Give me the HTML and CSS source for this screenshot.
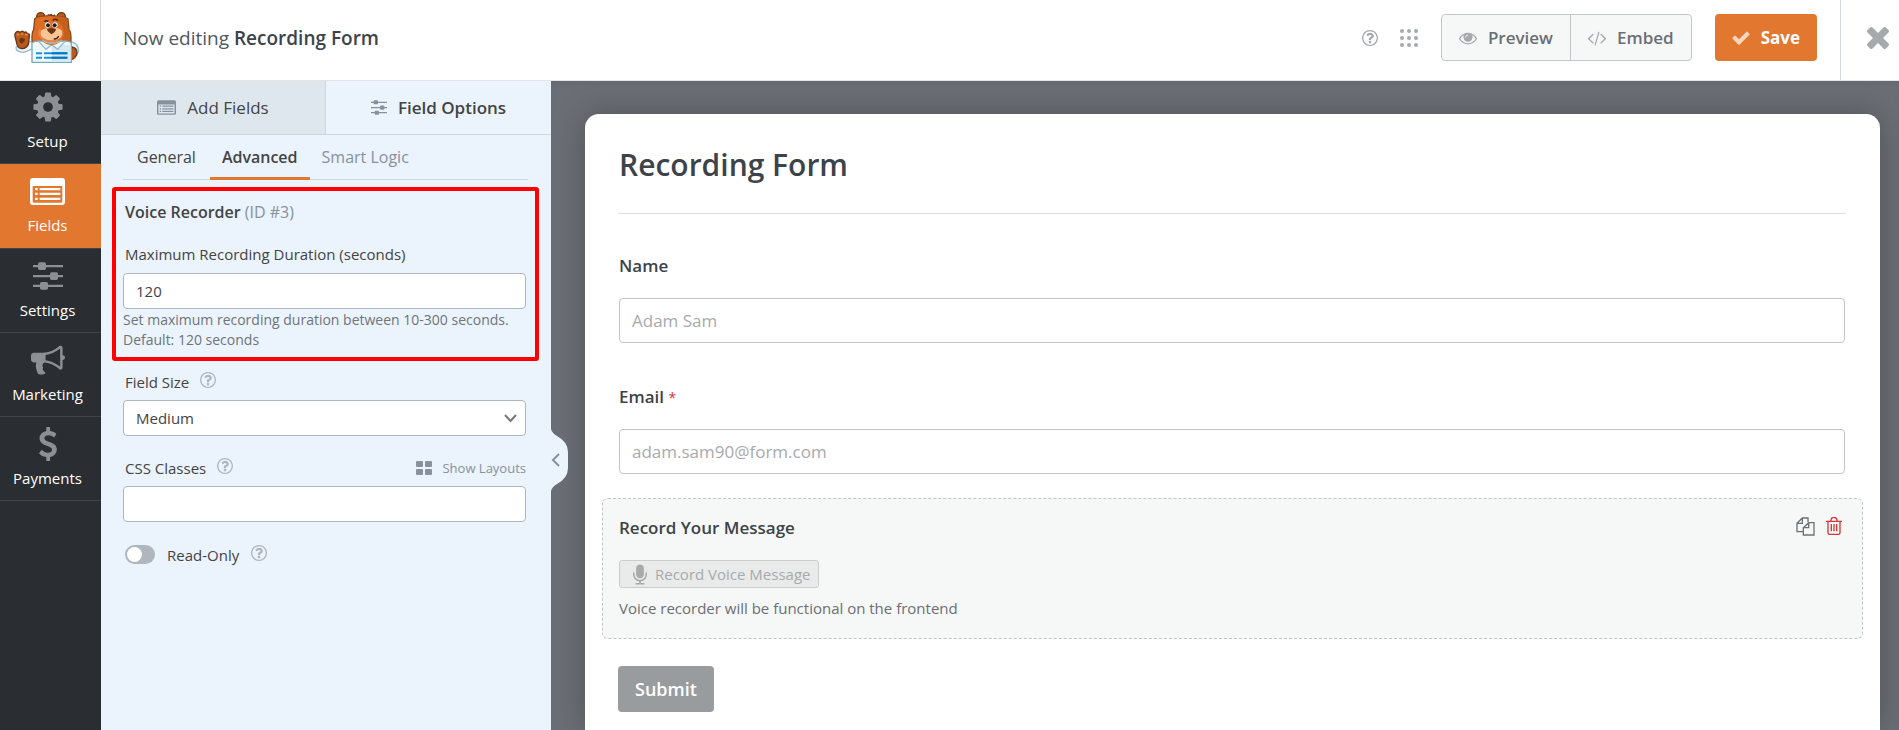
FILE: index.html
```html
<!DOCTYPE html>
<html lang="en">
<head>
<meta charset="utf-8">
<title>Recording Form</title>
<link rel="stylesheet" href="styles.css">
</head>
<body>
<svg class="defs" aria-hidden="true">
  <symbol id="help" viewBox="128 128 1536 1536"><path d="M1008 1200v160q0 14-9 23t-23 9h-160q-14 0-23-9t-9-23v-160q0-14 9-23t23-9h160q14 0 23 9t9 23zm256-496q0 50-15 90t-45.500 69-52 44-59.500 36q-32 18-46.500 28t-26 24-11.500 29v32q0 14-9 23t-23 9h-160q-14 0-23-9t-9-23v-68q0-35 10.500-64.500t24-47.500 39-35.500 41-25.500 44.500-21q53-25 75-43t22-49q0-42-43.500-71.500t-95.500-29.500q-56 0-95 27-29 20-80 83-9 12-25 12-11 0-19-6l-108-82q-10-7-12-20t5-23q122-192 349-192 129 0 238.500 89.500t109.500 214.500zm-368-448q-130 0-248.500 51t-204 136.500-136.500 204-51 248.500 51 248.500 136.500 204 204 136.500 248.500 51 248.500-51 204-136.500 136.500-204 51-248.500-51-248.500-136.500-204-204-136.500-248.500-51zm768 640q0 209-103 385.500t-279.500 279.500-385.500 103-385.500-103-279.500-279.500-103-385.500 103-385.500 279.500-279.500 385.500-103 385.500 103 279.500 279.500 103 385.500z"/></symbol>
  <symbol id="sliders" viewBox="0 0 90 84"><path d="M0 9h90v7H0zM0 39h90v7H0zM0 68h90v7H0z"/><rect x="15" y="1" width="24" height="23" rx="5"/><rect x="51" y="31" width="24" height="23" rx="5"/><rect x="21" y="60" width="24" height="23" rx="5"/></symbol>
  <symbol id="list" viewBox="0 0 105 81"><path fill-rule="evenodd" d="M9 0h87q9 0 9 9v63q0 9-9 9H9q-9 0-9-9V9Q0 0 9 0zM8 24v46q0 4 4 4h81q4 0 4-4V24zM15 30h8v7h-8zM29 30h62v7H29zM15 44h8v7h-8zM29 44h62v7H29zM15 59h8v7h-8zM29 59h62v7H29z"/></symbol>
</svg>

<header class="topbar">
  <div class="logo">
    <svg class="bear" viewBox="36 27 210 168" role="img" aria-label="Bear mascot">
      <path d="M48 142q-1 14 24 15l30-12V126l-28-3z" fill="#e9f6fc" stroke="#8fbccc" stroke-width="4"/>
      <path d="M48 97q7-6 12 1 7-9 13 0 7-6 9 4 8-2 6 7l-3 24q-6 12-18 13-13-1-16-13l-6-24q-2-8 3-12z" fill="#b85b1e" stroke="#6b3413" stroke-width="4"/>
      <path d="M50 104h8m4-2h8m5 2h8" stroke="#e88a4a" stroke-width="5"/><path d="M58 117l8-4 9 4-2 8-8 6-7-6z" fill="#6b3413"/>
      <path d="M206 124q31 3 29 31-6 14-20 11z" fill="#e9f6fc" stroke="#8fbccc" stroke-width="4"/>
      <path d="M215 141q16 2 16 19-4 16-18 19z" fill="#b85b1e" stroke="#6b3413" stroke-width="4"/>
      <circle cx="122" cy="50" r="12" fill="#b85b1e" stroke="#6b3413" stroke-width="4"/><circle cx="184" cy="50" r="12" fill="#b85b1e" stroke="#6b3413" stroke-width="4"/>
      <path d="M104 57q5-7 16-8l24-2 6-3 5 3 20 2q18 0 29 8l3 32q7 6 6 34l-6 8H102l-6-9q-1-26 5-33z" fill="#dd6c25" stroke="#8b4418" stroke-width="4"/>
      <path d="M163 48q30 0 39 10l3 33q7 8 6 31l-5 7h-27q20-20 9-48z" fill="#c45f1e"/>
      <path d="M142 46l2-4 4 4 6-5 5 5 5-3 2 5z" fill="#6b3413"/>
      <path d="M122 92q12-9 31-7 26-4 33 8 5 15-9 23-22 11-44 0-17-8-11-24z" fill="#f9c594"/><path d="M120 88q-7 24 15 33 20 8 40 0" fill="none" stroke="#e9834a" stroke-width="6"/>
      <circle cx="143" cy="75" r="8" fill="#fff"/><circle cx="165" cy="75" r="8" fill="#fff"/><circle cx="144" cy="76" r="6" fill="#16222c"/><circle cx="164" cy="76" r="6" fill="#16222c"/>
      <path d="M133 65q6-5 12-1m13-3q9-7 15 1" fill="none" stroke="#4a240e" stroke-width="5"/>
      <path d="M141 87q13-6 27 0-1 9-13 16-13-7-14-16z" fill="#6b3413"/><path d="M161 117q11 1 15-9" fill="none" stroke="#4a240e" stroke-width="4"/>
      <path d="M96 128q15-7 24-3l35 7 36-7q11-4 23 3v59H96z" fill="#f1f9fd" stroke="#78a9bc" stroke-width="4"/>
      <path d="M155 135h56v50h-56z" fill="#d5eaf3"/>
      <path d="M116 124l22 24 17-14 18 14 22-24-15-1q-25 12-49 0z" fill="#e9f6fc" stroke="#8fbccc" stroke-width="4"/><path d="M121 121q34 20 69 0l-20 11q-15 6-31 0z" fill="#dd6c25"/>
      <path d="M108 160h18m6 0h70M108 173h18m6 0h70" stroke="#1793dc" stroke-width="6"/><path d="M155 160h47M155 173h47" stroke="#0875bd" stroke-width="6"/>
    </svg>
  </div>
  <div class="editing">Now editing <strong>Recording Form</strong></div>
  <div class="actions">
    <button class="icon-button" type="button" aria-label="Help"><svg class="i16" aria-hidden="true"><use href="#help"/></svg></button>
    <button class="icon-button apps" type="button" aria-label="Apps"><svg width="18" height="18" viewBox="0 0 18 18" aria-hidden="true"><g id="r"><circle cx="2" cy="2" r="2"/><circle cx="9" cy="2" r="2"/><circle cx="16" cy="2" r="2"/></g><use href="#r" y="7"/><use href="#r" y="14"/></svg></button>
    <div class="group">
      <button type="button"><svg width="18" height="18" viewBox="0 0 1792 1792" aria-hidden="true"><path d="M1664 960q-152-236-381-353 61 104 61 225 0 185-131.500 316.500t-316.500 131.500-316.500-131.500-131.500-316.500q0-121 61-225-229 117-381 353 133 205 333.500 326.500t434.500 121.500 434.500-121.500 333.500-326.500zm128 0q0 34-20 69-140 230-376.500 368.500t-499.500 138.500-499.500-139-376.500-368q-20-35-20-69t20-69q140-229 376.500-368t499.500-139 499.500 139 376.500 368q20 35 20 69z"/><path d="M896 528q-125 0-214 90t-90 214q0 48 48 48t48-48q0-86 61-147t147-61q48 0 48-48t-48-48z" fill="#f6f8f7"/><circle cx="896" cy="832" r="400"/><path d="M896 560q-110 0-190 80t-80 190q0 40 40 40t40-40q0-80 56-136t134-56q40 0 40-39t-40-39z" fill="#f6f8f7"/></svg>Preview</button>
      <button type="button"><svg width="18" height="18" viewBox="0 0 1792 1792" aria-hidden="true"><path d="M553 1399l-50 50q-10 10-23 10t-23-10l-466-466q-10-10-10-23t10-23l466-466q10-10 23-10t23 10l50 50q10 10 10 23t-10 23l-393 393 393 393q10 10 10 23t-10 23zm591-1067l-373 1291q-4 13-15.500 19.500t-23.500 2.500l-62-17q-13-4-19.500-15.500t-2.500-24.500l373-1291q4-13 15.500-19.500t23.500-2.500l62 17q13 4 19.500 15.500t2.500 24.500zm657 651l-466 466q-10 10-23 10t-23-10l-50-50q-10-10-10-23t10-23l393-393-393-393q-10-10-10-23t10-23l50-50q10-10 23-10t23 10l466 466q10 10 10 23t-10 23z"/></svg>Embed</button>
    </div>
    <button class="save" type="button"><svg width="18" height="18" viewBox="80 100 1632 1632" aria-hidden="true"><path d="M1671 566q0 40-28 68l-724 724-136 136q-28 28-68 28t-68-28l-136-136-362-362q-28-28-28-68t28-68l136-136q28-28 68-28t68 28l294 295 656-657q28-28 68-28t68 28l136 136q28 28 28 68z"/></svg>Save</button>
  </div>
  <button class="close" type="button" aria-label="Close"><svg width="22" height="22" viewBox="302 366 1188 1188" aria-hidden="true"><path d="M1490 1322q0 40-28 68l-136 136q-28 28-68 28t-68-28l-294-294-294 294q-28 28-68 28t-68-28l-136-136q-28-28-28-68t28-68l294-294-294-294q-28-28-28-68t28-68l136-136q28-28 68-28t68 28l294 294 294-294q28-28 68-28t68 28l136 136q28 28 28 68t-28 68l-294 294 294 294q28 28 28 68z"/></svg></button>
</header>

<div class="workspace">
  <nav class="rail">
    <a href="#setup"><svg width="34" height="34" viewBox="0 0 1792 1792" aria-hidden="true"><path d="M1152 896q0-106-75-181t-181-75-181 75-75 181 75 181 181 75 181-75 75-181zm512-109v222q0 12-8 23t-20 13l-185 28q-19 54-39 91 35 50 107 138 10 12 10 25t-9 23q-27 37-99 108t-94 71q-12 0-26-9l-138-108q-44 23-91 38-16 136-29 186-7 28-36 28h-222q-14 0-24.500-8.500t-11.500-21.500l-28-184q-49-16-90-37l-141 107q-10 9-25 9-14 0-25-11-126-114-165-168-7-10-7-23 0-12 8-23 15-21 51-66.500t54-70.500q-27-50-41-99l-183-27q-13-2-21-12.500t-8-23.500v-222q0-12 8-23t19-13l186-28q14-46 39-92-40-57-107-138-10-12-10-24 0-10 9-23 26-36 98.500-107.500t94.500-71.500q13 0 26 10l138 107q44-23 91-38 16-136 29-186 7-28 36-28h222q14 0 24.500 8.500t11.500 21.500l28 184q49 16 90 37l142-107q9-9 24-9 13 0 25 10 129 119 165 170 7 8 7 22 0 12-8 23-15 21-51 66.500t-54 70.500q26 50 41 98l183 28q13 2 21 12.500t8 23.500z"/></svg>Setup</a>
    <a class="active" href="#fields"><svg width="35" height="27" aria-hidden="true"><use href="#list"/></svg>Fields</a>
    <a href="#settings"><svg width="30" height="28" aria-hidden="true"><use href="#sliders"/></svg>Settings</a>
    <a href="#marketing"><svg width="34" height="34" viewBox="0 0 1792 1792" aria-hidden="true"><path d="M1664 640q53 0 90.500 37.500t37.500 90.500-37.500 90.500-90.500 37.500v384q0 52-38 90t-90 38q-417-347-812-380-58 19-91 66t-31 100.500 40 92.500q-20 33-23 65.500t6 58 33.500 55 48 50 61.500 50.500q-29 58-111.500 83t-168.500 11.500-132-55.500q-7-23-29.500-87.500t-32-94.500-23-89-15-101 3.500-98.500 22-110.500h-122q-66 0-113-47t-47-113v-192q0-66 47-113t113-47h480q435 0 896-384 52 0 90 38t38 90v384zm-128 604v-954q-394 302-768 343v270q377 42 768 341z"/></svg>Marketing</a>
    <a href="#payments"><svg width="34" height="34" viewBox="0 0 1792 1792" aria-hidden="true"><path d="M1362 1185q0 153-99.500 263.500t-258.500 136.500v175q0 14-9 23t-23 9h-135q-13 0-22.500-9.500t-9.500-22.500v-175q-66-9-127.500-31t-101.500-44.500-74-48-46.500-37.500-17.500-18q-17-21-2-41l103-135q7-10 23-12 15-2 24 9l2 2q113 99 243 125 37 8 74 8 81 0 142.500-43t61.500-122q0-28-15-53t-33.500-42-58.500-37.500-66-32-80-32.500q-39-16-61.500-25t-61.500-26.500-62.500-31-56.500-35.500-53.500-42.500-43.500-49-35.500-58-21-66.500-8.500-78q0-138 98-242t255-134v-180q0-13 9.500-22.500t22.500-9.500h135q14 0 23 9t9 23v176q57 6 110.500 23t87 33.500 63.500 37.500 39 29 15 14q17 18 5 38l-81 146q-8 15-23 16-14 3-27-7-3-3-14.500-12t-39-26.500-58.500-32-74.500-26-85.500-11.500q-95 0-155 43t-60 111q0 26 8.500 48t29.500 41.500 39.500 33 56 31 60.500 27 70 27.500q53 20 81 31.500t76 35 75.500 42.500 62 50 53 63.500 31.500 76.500 13 94z"/></svg>Payments</a>
  </nav>

  <aside class="panel">
    <div class="tabs">
      <button type="button"><svg width="19" height="15" aria-hidden="true"><use href="#list"/></svg>Add Fields</button>
      <button class="current" type="button"><svg width="16" height="15" aria-hidden="true"><use href="#sliders"/></svg>Field Options</button>
    </div>
    <div class="options">
      <div class="subtabs">
        <button type="button">General</button>
        <button class="current" type="button">Advanced</button>
        <button class="muted" type="button">Smart Logic</button>
      </div>
      <section class="highlight">
        <h2>Voice Recorder <span>(ID #3)</span></h2>
        <label for="duration">Maximum Recording Duration (seconds)</label>
        <input class="control" id="duration" type="text" value="120">
        <p>Set maximum recording duration between 10-300 seconds. Default: 120 seconds</p>
      </section>
      <div class="row">
        <div class="row-label"><label for="size">Field Size</label><svg class="i16" aria-hidden="true"><use href="#help"/></svg></div>
        <div class="select">
          <select class="control" id="size"><option>Medium</option></select>
          <svg width="13" height="9" viewBox="0 0 13 9" aria-hidden="true"><path d="M1 1l5.500 6L12 1" fill="none" stroke="#777" stroke-width="2"/></svg>
        </div>
      </div>
      <div class="row">
        <div class="row-label"><label for="css">CSS Classes</label><svg class="i16" aria-hidden="true"><use href="#help"/></svg>
          <a class="layouts" href="#layouts"><svg width="16" height="14" viewBox="0 0 16 14" aria-hidden="true"><rect width="7" height="6" rx="1"/><rect x="9" width="7" height="6" rx="1"/><rect y="8" width="7" height="6" rx="1"/><rect x="9" y="8" width="7" height="6" rx="1"/></svg>Show Layouts</a></div>
        <input class="control" id="css" type="text">
      </div>
      <div class="row-label toggle-row"><input class="toggle" id="ro" type="checkbox"><label for="ro">Read-Only</label><svg class="i16" aria-hidden="true"><use href="#help"/></svg></div>
    </div>
    <button class="collapse" type="button" aria-label="Collapse panel"><svg width="18" height="62" viewBox="0 0 18 62" aria-hidden="true"><path d="M0 0q1 4 6 7 11 6 11 16v16q0 10-11 16-5 3-6 7z" fill="#ebf3fc"/><path d="M8 25l-6 6 6 6" fill="none" stroke="#86919e" stroke-width="2"/></svg></button>
  </aside>

  <main class="preview">
    <form class="card">
      <h1>Recording Form</h1>
      <div class="field"><label for="name">Name</label><input id="name" type="text" placeholder="Adam Sam"></div>
      <div class="field"><label for="email">Email <span class="req">*</span></label><input id="email" type="email" placeholder="adam.sam90@form.com"></div>
      <div class="selected">
        <div class="selected-head"><h2>Record Your Message</h2>
          <button type="button" aria-label="Duplicate"><svg width="19" height="19" viewBox="0 0 57 57" aria-hidden="true"><g fill="none" stroke="#6b7177" stroke-width="4"><path d="M21 44H3V19L19 3h17v12M19 3v16H3"/><path d="M38 17h16v37H22V32zM38 17v15H22"/></g></svg></button>
          <button type="button" aria-label="Delete"><svg width="16" height="18" viewBox="0 0 48 54" aria-hidden="true"><g fill="none" stroke="#d63638" stroke-width="4"><path d="M0 13h48M6 13v34q0 5 5 5h26q5 0 5-5V13M14 12l3-8q1-2 3-2h8q2 0 3 2l3 8M16 21v22M24 21v22M32 21v22"/></g></svg></button>
        </div>
        <button class="record" type="button" disabled><svg width="14" height="21" viewBox="320 0 1152 1664" aria-hidden="true"><path d="M1472 704v128q0 221-147.500 384.500t-364.500 187.500v132h256q26 0 45 19t19 45-19 45-45 19h-640q-26 0-45-19t-19-45 19-45 45-19h256v-132q-217-24-364.500-187.500t-147.500-384.500v-128q0-26 19-45t45-19 45 19 19 45v128q0 185 131.500 316.500t316.500 131.500 316.500-131.500 131.500-316.500v-128q0-26 19-45t45-19 45 19 19 45zm-256-384v512q0 132-94 226t-226 94-226-94-94-226v-512q0-132 94-226t226-94 226 94 94 226z"/></svg>Record Voice Message</button>
        <p>Voice recorder will be functional on the frontend</p>
      </div>
      <button class="submit" type="submit">Submit</button>
    </form>
  </main>
</div>
</body>
</html>
```
FILE: styles.css
```css
* { box-sizing: border-box; }
body { margin: 0; min-height: 100vh; display: flex; flex-direction: column; font: 15px/20px "Open Sans", "Noto Sans", sans-serif; color: #444; background: #6b6e75; }
h1, h2, p { margin: 0; }
button, input, select { font: inherit; color: inherit; }
button { padding: 0; border: 0; background: none; }
svg { flex: none; display: block; fill: currentColor; }
.defs { position: absolute; width: 0; height: 0; }
.i16 { width: 16px; height: 16px; color: #b0b6bd; }

.topbar { display: flex; height: 81px; background: #fff; border-bottom: 1px solid #e2e4e6; }
.logo { width: 101px; border-right: 1px solid #d6d9dc; display: flex; padding: 9px 0 0 12px; }
.bear { width: 70px; height: 56px; }
.editing { padding: 26px 0 0 22px; font-size: 19px; line-height: 24px; color: #50575e; }
.editing strong { font-weight: 600; color: #3c434a; }
.actions { margin-left: auto; display: flex; align-items: center; padding: 0 23px 5px 0; }
.icon-button, .icon-button .i16 { color: #a6aaad; }
.apps { margin: 0 23px 0 22px; }
.group { display: flex; height: 47px; border: 1px solid #c3c6c9; border-radius: 4px; background: #f6f8f7; color: #6b6e75; font-weight: 600; font-size: 17px; }
.group button { display: flex; align-items: center; gap: 11px; padding: 0 17px; }
.group button + button { border-left: 1px solid #c3c6c9; }
.group svg { color: #a6aaad; }
.save { display: flex; align-items: center; gap: 11px; height: 47px; margin-left: 23px; padding: 0 17px; border-radius: 4px; background: #e27730; color: #fff; font-weight: 700; font-size: 17px; }
.save svg { color: #f9d6c0; }
.close { width: 59px; padding: 0 0 5px 26px; border-left: 1px solid #d6d9dc; color: #a6aaad; }

.workspace { display: flex; flex: 1; }
.rail { width: 101px; flex: none; background: #2a2e32; }
.rail a { height: 84px; border-bottom: 1px solid #3f444b; padding: 7px 6px 0 0; display: grid; grid-template-rows: 40px 28px; place-items: center; color: #fff; text-decoration: none; font-size: 15px; }
.rail a:first-child { height: 83px; padding-top: 6px; }
.rail svg { color: #8c8f94; }
.rail .active { height: 85px; background: #e27730; }
.rail .active svg { color: #fff; }

.panel { width: 450px; flex: none; background: #ebf3fc; position: relative; }
.tabs { display: grid; grid-template-columns: 1fr 1fr; height: 54px; }
.tabs button { display: flex; align-items: center; justify-content: center; gap: 11px; font-size: 17px; background: #dfe7ee; border-bottom: 1px solid #ced7e0; border-right: 1px solid #ced7e0; }
.tabs .current { background: #ebf3fc; font-weight: 600; border-right: 0; }
.tabs svg { color: #86919e; }
.options { padding: 0 23px 0 22px; }
.subtabs { display: flex; height: 45px; border-bottom: 1px solid #ced7e0; }
.subtabs button { height: 45px; padding: 2px 12px 0; border-bottom: 3px solid transparent; font-size: 16px; }
.subtabs button:first-child { padding: 2px 14px 0; }
.subtabs .current { font-weight: 600; border-color: #e27730; }
.subtabs .muted { color: #86919e; }
.highlight { margin: 7px -11px 0; border: 4px solid #f00; border-radius: 3px; height: 174px; padding: 11px 9px 0 7px; }
.highlight h2 { font-size: 16px; line-height: 20px; font-weight: 600; padding-left: 2px; }
.highlight h2 span { font-weight: 400; color: #86919e; }
.highlight label { display: block; margin: 22px 0 9px; padding-left: 2px; }
.highlight p { font-size: 14px; line-height: 20px; color: #6f747a; margin-top: 1px; }
.control { display: block; width: 100%; height: 36px; padding: 0 12px; border: 1px solid #b0b6bd; border-radius: 4px; background: #fff; }
.row { margin: 0 2px 0 0; }
.row-label { display: flex; align-items: center; gap: 11px; height: 39px; padding: 3px 0 0 2px; }
.row-label .i16 { margin-bottom: 4px; }
.row + .row { margin-top: 11px; }
.select { display: grid; align-items: center; }
.select > * { grid-area: 1 / 1; }
.select select { appearance: none; }
.select svg { justify-self: end; margin-right: 9px; pointer-events: none; }
.layouts { margin-left: auto; display: flex; align-items: center; gap: 10px; font-size: 13px; color: #86919e; text-decoration: none; }
.toggle-row { height: 62px; gap: 12px; }
.toggle { appearance: none; width: 30px; height: 19px; margin: 0; border-radius: 10px; background: #b0b6bd; display: flex; padding: 2px; }
.toggle::before { content: ""; width: 15px; height: 15px; border-radius: 50%; background: #fff; }
.toggle:checked { justify-content: flex-end; background: #e27730; }
.collapse { position: absolute; left: 100%; top: 348px; }

.preview { flex: 1; display: flex; padding: 33px 19px 0 34px; box-shadow: inset 0 4px 8px -4px rgba(0,0,0,.1); }
.card { flex: 1; background: #fff; border-radius: 14px 14px 0 0; box-shadow: 0 0 30px rgba(0,0,0,.25); padding: 31px 17px 19px; }
.card h1 { margin: 0 17px 0 16px; padding: 0 1px 28px; border-bottom: 1px solid #dcdcde; font-size: 30px; line-height: 40px; font-weight: 600; color: #3c434a; }
.field { margin: 0 18px 0 17px; }
.field label { display: block; padding: 42px 0 22px; font-size: 17px; line-height: 20px; font-weight: 600; color: #3c434a; }
.field + .field label { padding-top: 44px; padding-bottom: 21px; }
.req { color: #d63638; font-weight: 400; font-size: 14px; }
.field input { display: block; width: 100%; height: 45px; padding: 0 12px; border: 1px solid #c3c4c7; border-radius: 4px; font-size: 17px; }
.field input::placeholder { color: #a7aaad; opacity: 1; }
.selected { margin-top: 24px; padding: 15px 20px 0 16px; height: 141px; border: 1px dashed #c3c4c7; border-radius: 6px; background: #f6f8f7; }
.selected-head { display: flex; align-items: flex-start; gap: 11px; margin-bottom: 18px; }
.selected-head button { padding-top: 3px; }
.selected h2 { margin-right: auto; font-size: 17px; line-height: 28px; font-weight: 600; color: #3c434a; }
.record { display: flex; align-items: center; gap: 8px; height: 28px; padding: 0 8px 0 13px; border: 1px solid #ccc; border-radius: 3px; background: #e9ebea; color: #a7aaad; }
.selected p { margin-top: 10px; color: #6b6e75; }
.submit { display: block; margin: 27px 0 0 16px; height: 46px; padding: 0 17px; border-radius: 4px; background: #999c9e; color: #fff; font-size: 18px; font-weight: 600; }
```
